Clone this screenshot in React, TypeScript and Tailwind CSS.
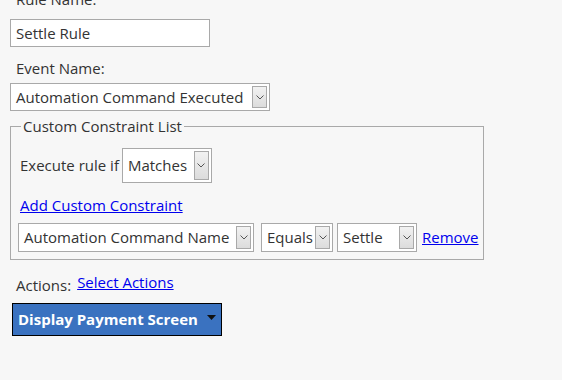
import type { ReactNode } from "react";

const font = { fontFamily: '"Open Sans", "Noto Sans", sans-serif' };

function Chevron() {
  return (
    <svg width="8" height="5" viewBox="0 0 8 5" className="text-[#555]">
      <path d="M0.5 0.5 L4 4 L7.5 0.5" fill="none" stroke="currentColor" strokeWidth="1" />
    </svg>
  );
}

function Select({
  value,
  className,
  tall,
}: {
  value: string;
  className: string;
  tall?: boolean;
}) {
  return (
    <div
      className={`flex items-stretch border border-[#a9a9a9] bg-white p-[2px] ${tall ? "h-[35px]" : "h-[29px]"} ${className}`}
    >
      <div className="flex flex-1 items-center pl-[3px] text-[15px] text-[#333] whitespace-nowrap overflow-hidden">
        {value}
      </div>
      <div className="flex w-[15px] items-center justify-center border border-[#a9a9a9] bg-gradient-to-b from-[#f2f2f2] to-[#dcdcdc]">
        <Chevron />
      </div>
    </div>
  );
}

function Link({ children, className = "" }: { children: ReactNode; className?: string }) {
  return <a className={`text-[15px] text-[#0000ee] underline cursor-pointer ${className}`}>{children}</a>;
}

export default function App() {
  return (
    <div className="h-[380px] w-[562px] overflow-hidden bg-[#f7f7f7] text-[#333]" style={font}>
      <div className="-mt-[11px] flex flex-col px-[10px]">
        <div className="pl-[6px] text-[15px] leading-[20px]">Rule Name:</div>
        <div className="mt-[10px] flex h-[28px] w-[200px] items-center border border-[#a9a9a9] bg-white pl-[5px] text-[15px]">
          Settle Rule
        </div>
        <div className="mt-[11px] pl-[6px] text-[15px] leading-[20px]">Event Name:</div>
        <Select value="Automation Command Executed" className="mt-[5px] w-[260px] !h-[28px]" />

        <fieldset className="m-0 mt-[6px] w-[474px] min-w-0 border border-[#a9a9a9] pl-[7px] pr-[4px] pb-[7px]">
          <legend className="ml-[3px] px-[2px] text-[15px] leading-[18px]">Custom Constraint List</legend>
          <div className="mt-[13px] flex items-center gap-[3px] pl-[2px]">
            <span className="text-[15px]">Execute rule if</span>
            <Select value="Matches" tall className="w-[90px]" />
          </div>
          <div className="mt-[12px] pl-[2px] leading-[20px]">
            <Link>Add Custom Constraint</Link>
          </div>
          <div className="mt-[8px] flex items-center">
            <Select value="Automation Command Name" className="w-[236px]" />
            <Select value="Equals" className="ml-[7px] w-[72px]" />
            <Select value="Settle" className="ml-[4px] w-[80px]" />
            <Link className="ml-[5px]">Remove</Link>
          </div>
        </fieldset>

        <div className="mt-[11px] flex items-start pl-[6px]">
          <span className="mt-[3px] text-[15px]">Actions:</span>
          <Link className="ml-[6px]">Select Actions</Link>
        </div>
        <div className="mt-[6px] ml-[2px] flex h-[33px] w-[210px] items-center justify-between border border-black bg-[#3a72c0] pl-[5px] pr-[5px]">
          <span className="text-[15px] font-bold text-white">Display Payment Screen</span>
          <svg width="9" height="5" viewBox="0 0 9 5" className="-mt-[4px]">
            <path d="M0 0 H9 L4.5 5 Z" fill="#111" />
          </svg>
        </div>
      </div>
    </div>
  );
}
